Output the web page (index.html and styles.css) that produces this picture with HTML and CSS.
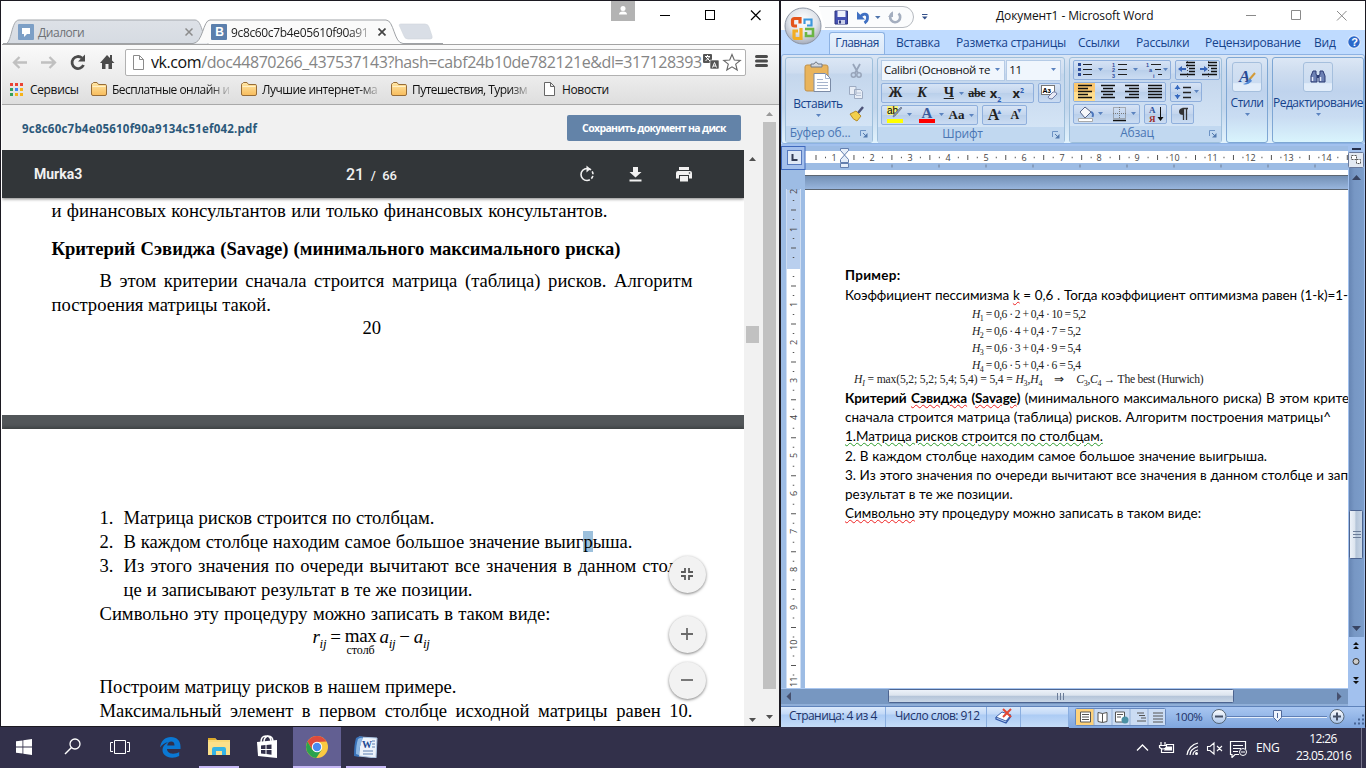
FILE: index.html
```
<!DOCTYPE html>
<html lang="ru">
<head>
<meta charset="utf-8">
<title>Рабочий стол</title>
<link rel="stylesheet" href="styles.css">
</head>
<body>
<svg width="0" height="0" class="defs">
  <defs>
    <linearGradient id="gFolder" x1="0" y1="0" x2="0" y2="1"><stop offset="0" stop-color="#ffe6a4"/><stop offset="1" stop-color="#f8bc5c"/></linearGradient>
    <linearGradient id="gTab" x1="0" y1="0" x2="0" y2="1"><stop offset="0" stop-color="#dde1e7"/><stop offset="1" stop-color="#d6dbe2"/></linearGradient>
    <radialGradient id="gOrb" cx=".5" cy=".35" r=".65"><stop offset="0" stop-color="#fff"/><stop offset=".6" stop-color="#dfe3ea"/><stop offset="1" stop-color="#a5acbb"/></radialGradient>
    <linearGradient id="gBall" x1="0" y1="0" x2="0" y2="1"><stop offset="0" stop-color="#fff"/><stop offset="1" stop-color="#a9c4ea"/></linearGradient>
    <symbol id="folder" viewBox="0 0 16 14"><path d="M.5 12V2.5q0-1 1-1l1-1H6l1.500 2H14q1.500 0 1.500 1V12q0 1.500-1.500 1.500H2Q.5 13.500.5 12z" fill="url(#gFolder)" stroke="#976d38"/><path d="M1.500 4.500h13" stroke="#fff1c8"/></symbol>
    <symbol id="launch" viewBox="0 0 8 8"><path d="M.5 6V.5H6" fill="none" stroke="#6d93c5"/><path d="M3 3l3 3" stroke="#5279ad"/><path d="M7.500 3v4.500H3z" fill="#5279ad"/></symbol>
    <symbol id="arr" viewBox="0 0 5 3"><path d="M0 0h5L2.500 3z" fill="#5b83bf"/></symbol>
  </defs>
</svg>

<main class="desktop">
  <section class="chrome">
    <header class="tabs">
      <svg class="tabshapes" width="440" height="26" viewBox="0 0 440 26">
        <path d="M2 25C9 25 8 1 16 1H192C200 1 200 25 206 25" fill="url(#gTab)" stroke="#a4a8ad"/>
        <path d="M397 8q-2-3 1-3h24q3 0 4 3l3 9q1 3-2 3h-22q-3 0-4-3z" fill="#d9dee6" stroke="#d0d5dc" stroke-width=".6"/>
        <path d="M0 24.500H190C200 24 200 1 207 1H383C391 1 391 24.500 400 24.500H440" fill="#fafafa" stroke="#9fa2a6"/>
      </svg>
      <div class="tab one">
        <svg width="16" height="16" viewBox="0 0 16 16"><rect width="16" height="16" rx="1" fill="#7c9fc6"/><path d="M4 4h8v6H9l-3 3v-3H4z" fill="#fff"/></svg>
        <span>Диалоги</span>
        <svg width="8" height="8" viewBox="0 0 8 8"><path d="M.5.5l7 7m0-7l-7 7" stroke="#8b8b8b" stroke-width="1.500"/></svg>
      </div>
      <div class="tab two">
        <svg width="16" height="16" viewBox="0 0 16 16"><rect width="16" height="16" rx="1" fill="#5b7fac"/><text x="4.200" y="12" class="vk">B</text></svg>
        <span class="fade">9c8c60c7b4e05610f90a91</span>
        <svg width="8" height="8" viewBox="0 0 8 8"><path d="M.5.5l7 7m0-7l-7 7" stroke="#444" stroke-width="1.700"/></svg>
      </div>
      <div class="winctl">
        <svg width="148" height="30" viewBox="0 0 148 30"><rect width="24" height="20" fill="#b3b3b3"/><circle cx="12" cy="7.500" r="2.500" fill="#fff"/><path d="M8 13.500q0-3 4-3t4 3z" fill="#fff"/><path d="M49 14.500h10" stroke="#000"/><rect x="94.500" y="9.500" width="9" height="9" fill="none" stroke="#000"/><path d="M140 9.500l9.500 9.500m0-9.500L140 19" stroke="#000" stroke-width="1.200"/></svg>
      </div>
    </header>
    <nav class="toolbar">
      <svg width="122" height="32" viewBox="0 0 122 32" fill="none">
        <path d="M25 17.500H12m5.500-5.500L12 17.500l5.500 5.500M39 17.500h14m-5.500-5.500l5.500 5.500-5.500 5.500" stroke="#c0c0c0" stroke-width="2.300"/>
        <path d="M80 13a6 6 0 1 0 1.500 7" stroke="#4b4b4b" stroke-width="2.800"/><path d="M83 9.500v7h-7z" fill="#4b4b4b"/>
        <path d="M98 18l7-8 3 3v-3h2v5.500l2.500 2.500H110v6h-3.500v-5h-3v5H100v-6z" fill="#4b4b4b"/>
      </svg>
      <div class="omnibox">
        <svg width="11" height="15" viewBox="0 0 11 15"><path d="M.5.5h6l4 4v10H.5zM6.500.5v4h4" fill="#fff" stroke="#8b8b8b"/></svg>
        <p class="url"><b>vk.com</b>/doc44870266_437537143?hash=cabf24b10de782121e&amp;dl=317128393</p>
        <svg width="40" height="20" viewBox="0 0 40 20"><rect x="0" y="2" width="9" height="9" rx="1" fill="#555"/><rect x="7" y="8" width="9" height="9" rx="1" fill="#555" stroke="#fff" stroke-width=".6"/><path d="M2 4.500h5M4.500 3v1.500M3 5l4 4M6.500 5L2.500 9M9.500 15.500l2-5 2 5m-3.300-1.500h2.600" stroke="#fff" fill="none"/><path d="M29 2.500l2.300 5.500 6 .4-4.600 3.800 1.500 5.800-5.200-3.200-5.200 3.200 1.500-5.800-4.600-3.800 6-.4z" fill="#fff" stroke="#666" stroke-width="1.100"/></svg>
      </div>
      <svg width="14" height="14" viewBox="0 0 14 14"><path d="M1.500 2.500h10M1.500 7h10M1.500 11.500h10" stroke="#4b4b4b" stroke-width="3" stroke-linecap="round"/></svg>
    </nav>
    <nav class="bookmarks">
      <svg width="13" height="13" viewBox="0 0 13 13"><path d="M0 0h3v3H0zM5 0h3v3H5z" fill="#ea4335"/><path d="M10 0h3v3h-3z" fill="#ea4335"/><path d="M0 5h3v3H0zM0 10h3v3H0z" fill="#34a05a"/><path d="M5 5h3v3H5z" fill="#4285f4"/><path d="M10 5h3v3h-3zM5 10h3v3H5zM10 10h3v3h-3z" fill="#f6b31a"/></svg>
      <span class="bm b0">Сервисы</span>
      <svg width="16" height="14"><use href="#folder"/></svg><span class="bm fade b1">Бесплатные онлайн и</span>
      <svg width="16" height="14"><use href="#folder"/></svg><span class="bm fade b2">Лучшие интернет-ма</span>
      <svg width="16" height="14"><use href="#folder"/></svg><span class="bm fade b3">Путешествия, Туризм</span>
      <svg width="11" height="14" viewBox="0 0 11 14"><path d="M.5.5h6l4 4v9H.5zM6.500.5v4h4" fill="#fff" stroke="#666"/></svg><span class="bm b4">Новости</span>
    </nav>
    <div class="viewport">
      <div class="page">
        <header class="vkbar"><strong>9c8c60c7b4e05610f90a9134c51ef042.pdf</strong><span class="save">Сохранить документ на диск</span></header>
        <div class="viewer">
          <div class="pdf">
            <header class="pdfbar">
              <span class="pname">Murka3</span><span class="pnum">21 <i>/</i> <small>66</small></span>
              <svg width="120" height="24" viewBox="0 0 120 24" fill="none">
                <path d="M11 6.500a6 6 0 0 0 0 12" stroke="#f1f1f1" stroke-width="1.600"/><path d="M11 18.500a6 6 0 0 0 0-12" stroke="#f1f1f1" stroke-width="1.600" stroke-dasharray="3 1.700"/><path d="M10.500 3.500l4 3.500-4 3.500z" fill="#f1f1f1"/>
                <path d="M57 5h5v5h3.500L59.500 15.500 53.500 10H57zM53.500 17.500h12v2h-12z" fill="#f1f1f1"/>
                <path d="M103 5h10v3h-10zM100 14.500V11q0-2 2-2h12q2 0 2 2v5.500h-3V13h-10v3.500h-3zM104 14h8v5.500h-8z" fill="#f1f1f1"/><circle cx="113.500" cy="11" r=".8" fill="#323639"/>
              </svg>
            </header>
            <article class="sheet first">
              <p class="ln l1">и финансовых консультантов или только финансовых консультантов.</p>
              <h2 class="ln l2">Критерий Сэвиджа (Savage) (минимального максимального риска)</h2>
              <p class="ln l3">В этом критерии сначала строится матрица (таблица) рисков. Алгоритм</p>
              <p class="ln l4">построения матрицы такой.</p>
              <p class="folio">20</p>
            </article>
            <article class="sheet second">
              <ol>
                <li><span>1.</span><p class="ln m1">Матрица рисков строится по столбцам.</p></li>
                <li><span>2.</span><p class="ln m2">В каждом столбце находим самое большое значение выиг<mark>р</mark>ыша.</p></li>
                <li><span>3.</span><p class="ln m3">Из этого значения по очереди вычитают все значения в данном столб-</p></li>
                <li><span></span><p class="ln m4">це и записывают результат в те же позиции.</p></li>
              </ol>
              <p class="ln m5">Символьно эту процедуру можно записать в таком виде:</p>
              <div class="eq"><i>r<sub>ij</sub></i><span>=</span><span class="mx">max<small>столб</small></span><i>a<sub>ij</sub></i><span>−</span><i>a<sub>ij</sub></i></div>
              <p class="ln m6">Построим матрицу рисков в нашем примере.</p>
              <p class="ln m7">Максимальный элемент в первом столбце исходной матрицы равен 10.</p>
            </article>
            <div class="fab f1"><svg width="14" height="14" viewBox="0 0 14 14"><path d="M1 5h4V1M9 1v4h4M13 9H9v4M5 13V9H1" fill="none" stroke="#5a5a5a" stroke-width="1.800"/></svg></div>
            <div class="fab f2"><svg width="14" height="14" viewBox="0 0 14 14"><path d="M7 1v12M1 7h12" stroke="#6a6a6a" stroke-width="1.800"/></svg></div>
            <div class="fab f3"><svg width="14" height="14" viewBox="0 0 14 14"><path d="M1 7h12" stroke="#6a6a6a" stroke-width="1.800"/></svg></div>
          </div>
          <svg class="vs" width="18" height="576" viewBox="0 0 18 576"><path d="M5 11h7L8.500 7z" fill="#505050"/><rect x="2" y="176" width="13" height="17" fill="#c1c1c1"/><path d="M5 568h7l-3.500 4z" fill="#505050"/></svg>
        </div>
      </div>
      <svg class="vs" width="16" height="621" viewBox="0 0 16 621"><path d="M3 11h7L6.500 7z" fill="#999"/><rect x="0" y="17" width="13" height="567" fill="#c1c1c1"/><path d="M3 610h7l-3.500 4z" fill="#505050"/></svg>
    </div>
  </section>

  <section class="word">
    <header class="title">
      <svg class="qat" width="160" height="30" viewBox="0 0 160 30" fill="none">
        <path d="M38 5.500h84a10.500 10.500 0 0 1 0 21H44" stroke="#b6bac0" fill="#fbfcfd"/>
        <path d="M54 10h12.500v13H54z" fill="#4450b2" stroke="#2f377f"/><path d="M56.500 10h8v6h-8z" fill="#eef1fb"/><path d="M57 19h7v4h-7z" fill="#c9cfe8"/><path d="M58 19.500h2v3h-2z" fill="#30397d"/>
        <path d="M79 16.500c3-5 8-4 7.500.5q0 3-3 5" stroke="#3f70c3" stroke-width="2.800"/><path d="M76 10.500v8h8z" fill="#3f70c3"/><path d="M94 15h5.500l-2.700 3z" fill="#4e73ac"/>
        <path d="M117.500 12.500a5 5 0 1 1-6-.5" stroke="#a4aebf" stroke-width="2.600"/><path d="M112 10v6h-5z" fill="#a4aebf"/>
        <path d="M141 13.500h5.500" stroke="#33508a"/><path d="M141 15.500h5.500l-2.700 3z" fill="#33508a"/>
      </svg>
      <span class="doctitle">Документ1 - Microsoft Word</span>
      <svg class="wctl" width="133" height="30" viewBox="0 0 133 30" fill="none" stroke="#8a8a8a"><path d="M14 14.500h10"/><path d="M59.500 9.500h9v9h-9zM105 10l9.500 9.500m0-9.500l-9.500 9.500"/></svg>
    </header>
    <svg class="orb" width="40" height="42" viewBox="0 0 40 42">
      <circle cx="20" cy="20" r="18" fill="url(#gOrb)" stroke="#8e96a5"/>
      <g fill="none" stroke-width="3.200"><path d="M17 17.500v-5h-5.500q-2 0-2 2V18q0 2 2 2H14" stroke="#e4551c"/><path d="M21.500 18v-4.500h7v6H24" stroke="#3d97dc" stroke-width="2.200"/><path d="M18 22v10.500h-5.500q-1.500 0-1.500-1.500V25h4" stroke="#f3ae24"/><path d="M22 23h8v7h-7v-4" stroke="#6bb544" stroke-width="2.600"/></g>
    </svg>
    <nav class="rtabs">
      <span class="active">Главная</span><span class="t2">Вставка</span><span class="t3">Разметка страницы</span><span class="t4">Ссылки</span><span class="t5">Рассылки</span><span class="t6">Рецензирование</span><span class="t7">Вид</span>
      <svg width="14" height="14" viewBox="0 0 14 14"><circle cx="7" cy="7" r="6.300" fill="#2b68ca" stroke="#dde9fa" stroke-width="1.200"/><text x="4.200" y="11" class="q">?</text></svg>
    </nav>
    <div class="ribbon">
      <div class="group clip">
        <div class="body">
          <div class="paste">
            <svg width="30" height="34" viewBox="0 0 30 34"><rect x="2" y="4" width="23" height="26" rx="2" fill="#e9b45c" stroke="#c0914b"/><path d="M8 6V3h3q2-4 4 0h4v3z" fill="#d3d7dd" stroke="#737b88"/><path d="M11 12.500h11.500l5 5v13H11z" fill="#fdfeff" stroke="#7b8ba6"/><path d="M22.500 12.500v5h5M14 18.500h6M14 21.500h11M14 24.500h11M14 27.500h11" fill="none" stroke="#a6b4cc"/></svg>
            <span>Вставить</span><svg width="5" height="3"><use href="#arr"/></svg>
          </div>
          <svg class="cut" width="18" height="62" viewBox="0 0 18 62" fill="none"><path d="M6 2l5 9M13 2L8 11" stroke="#98a5ba" stroke-width="1.800"/><circle cx="6.500" cy="13" r="2.200" stroke="#98a5ba" stroke-width="1.500"/><circle cx="12" cy="13" r="2.200" stroke="#98a5ba" stroke-width="1.500"/><path d="M2.500 24.500H9v8H2.500zM7.500 27.500h6l2 2v7h-8z" fill="#e7edf6" stroke="#9dabc2"/><path d="M9 31h5M9 33.500h5" stroke="#b6c2d6"/><path d="M16 45l-5 6" stroke="#4d5378" stroke-width="2.500"/><path d="M3 52l6-3 5 5-4 5q-4-1-7-7z" fill="#f1cf4c" stroke="#b68d2b"/></svg>
        </div>
        <footer>Буфер об...<svg width="8" height="8"><use href="#launch"/></svg></footer>
      </div>
      <div class="group font">
        <div class="body rows">
          <div class="combos"><div class="combo c1"><span>Calibri (Основной те</span><svg width="5" height="3"><use href="#arr"/></svg></div><div class="combo c2"><span>11</span><svg width="5" height="3"><use href="#arr"/></svg></div></div>
          <div class="row">
            <div class="btns w153"><b class="g1">Ж</b><b class="g1 it">К</b><b class="g1 un">Ч</b><svg width="5" height="3"><use href="#arr"/></svg><s>abc</s><b class="xx">x<sub>2</sub></b><b class="xx">x<sup>2</sup></b></div>
            <div class="btns w23"><svg width="18" height="18" viewBox="0 0 18 18"><rect x=".5" y="1.500" width="13" height="9" fill="#fff" stroke="#777"/><text x="1.500" y="9" class="aa">Aз</text><path d="M7 13l5-5q3-1 4 2l-5 5q-4 0-4-2z" fill="#e8eaf5" stroke="#6d7ba5"/></svg></div>
          </div>
          <div class="row">
            <div class="btns w96">
              <svg width="27" height="18" viewBox="0 0 27 18"><rect x="2" y="0" width="11" height="9" fill="#f8f27c"/><text x="2" y="8" class="ab">ab</text><path d="M17 2l-7 8-2 1 1-3 7-7z" fill="#8693ab" stroke="#5f6a80" stroke-width=".6"/><path d="M2 13h16v4H2z" fill="#ff0"/><path d="M22 7h5l-2.500 3z" fill="#5b83bf"/></svg>
              <svg width="27" height="18" viewBox="0 0 27 18"><text x="4.500" y="12" class="fa">A</text><path d="M2 13h16v4H2z" fill="red"/><path d="M22 7h5l-2.500 3z" fill="#5b83bf"/></svg>
              <b class="cs">Aa</b><svg width="5" height="3"><use href="#arr"/></svg>
            </div>
            <div class="btns w43"><b class="big">A<em>▴</em></b><b class="sml">A<em>▾</em></b></div>
          </div>
        </div>
        <footer>Шрифт<svg width="8" height="8"><use href="#launch"/></svg></footer>
      </div>
      <div class="group para">
        <div class="body rows">
          <div class="row">
            <div class="btns w98"><svg width="96" height="18" viewBox="0 0 96 18"><path d="M4 2h3v3H4zM4 7h3v3H4zM4 12h3v3H4z" fill="#2d4c9b"/><path d="M9 3.500h9M9 8.500h9M9 13.500h9M44 3.500h9M44 8.500h9M44 13.500h9M77 3.500h10M81 8.500h6M84 13.500h4" stroke="#222"/><path d="M24 7h5l-2.500 3zM59 7h5l-2.500 3zM89 7h5l-2.500 3z" fill="#5b83bf"/><text x="38" y="5.500" class="n">1</text><text x="38" y="11" class="n">2</text><text x="38" y="16.500" class="n">3</text><text x="72" y="5.500" class="n">1</text><text x="75" y="11" class="n">a</text><text x="79" y="16.500" class="n">i</text></svg></div>
            <div class="btns w45"><svg width="43" height="18" viewBox="0 0 43 18"><path d="M10 1.500h9M10 4.500h9M13 7.500h6M13 10.500h6M4 13.500h15M32 1.500h9M32 4.500h9M35 7.500h6M35 10.500h6M26 13.500h15" stroke="#111" stroke-width="1.600"/><path d="M2 8l4-3v2h4v2H6v2zM32 8l-4-3v2h-4v2h4v2z" fill="#3865b8"/><path d="M11.500 0v17M32.500 0v17" stroke="#555" stroke-dasharray="1 2"/></svg></div>
          </div>
          <div class="row">
            <div class="btns w93"><svg width="91" height="18" viewBox="0 0 91 18"><rect width="21" height="18" fill="#fbc76f"/><path d="M0 9h21v9H0z" fill="#ffdd8e"/><path d="M4 2.500h14M4 5.500h10M4 8.500h14M4 11.500h10M4 14.500h14M27 2.500h14M29 5.500h10M27 8.500h14M29 11.500h10M27 14.500h14M51 2.500h14M55 5.500h10M51 8.500h14M55 11.500h10M51 14.500h14M74 2.500h14M74 5.500h14M74 8.500h14M74 11.500h14M74 14.500h14" stroke="#111" stroke-width="1.400"/></svg></div>
            <div class="btns w32"><svg width="29" height="18" viewBox="0 0 29 18"><path d="M5.500 2v14" stroke="#386bc0" stroke-dasharray="5 4"/><path d="M2.500 6h6l-3-4zM2.500 12h6l-3 4z" fill="#386bc0"/><path d="M11 4.500h8M11 9.500h8M11 14.500h8" stroke="#222" stroke-width="1.300"/><path d="M22 7h5l-2.500 3z" fill="#5b83bf"/></svg></div>
          </div>
          <div class="row">
            <div class="btns w67"><svg width="65" height="18" viewBox="0 0 65 18"><path d="M6 7l5-5 6 5-6 6z" fill="#f7f8fb" stroke="#566488"/><path d="M17 7q3 1 1.500 5" stroke="#4d77bd" stroke-width="2" fill="none"/><path d="M4.500 13.500h14v3h-14z" fill="#fff" stroke="#aaa"/><path d="M24 7h5l-2.500 3zM57 7h5l-2.500 3z" fill="#5b83bf"/><path d="M39.500 2.500h12v11h-12zM45.500 2v12M39 8.500h13" fill="none" stroke="#777" stroke-dasharray="1 1"/><path d="M39 15.500h13" stroke="#111" stroke-width="1.500"/></svg></div>
            <div class="btns w23"><svg width="19" height="18" viewBox="0 0 19 18"><text x="3" y="8" class="sa">A</text><text x="3" y="17" class="sb">Я</text><path d="M14.500 2v12" stroke="#111"/><path d="M11.500 12h6l-3 4z" fill="#111"/></svg></div>
            <div class="btns w23"><svg width="14" height="16" viewBox="0 0 14 16"><path d="M12 2.500H6.500M7.500 2v12M10.500 2v12" stroke="#333" stroke-width="1.300" fill="none"/><path d="M7.500 2v7Q3 9 3 5.500T7.500 2z" fill="#333"/></svg></div>
          </div>
        </div>
        <footer>Абзац<svg width="8" height="8"><use href="#launch"/></svg></footer>
      </div>
      <div class="group tall st"><div class="tile"><svg width="20" height="20" viewBox="0 0 20 20"><text x="2" y="15" class="sty">A</text><path d="M18 6l-6 7" stroke="#d39a38" stroke-width="2"/><path d="M13 11l2 3q-5 5-9 3 5-1 7-6z" fill="#4f87d4"/></svg></div><span>Стили</span><svg width="5" height="3"><use href="#arr"/></svg></div>
      <div class="group tall ed"><div class="tile"><svg width="20" height="20" viewBox="0 0 20 20"><path d="M5 4h3v3l1 2v6H3V9zM12 4h3l2 5v6h-6V9l1-2z" fill="#6d81b4" stroke="#2c3b73"/><path d="M9 8h2v3H9z" fill="#2c3b73"/><path d="M4.500 10v4M12.500 10v4" stroke="#e4eafa" stroke-width="1.500"/></svg></div><span>Редактирование</span><svg width="5" height="3"><use href="#arr"/></svg></div>
    </div>
    <div class="work">
      <div class="canvas">
        <svg class="hr" width="567" height="24" viewBox="0 0 567 24">
          <rect width="567" height="24" fill="#9dbce4"/><rect x="24" y="5" width="543" height="12" fill="#fff"/><rect x=".5" y=".5" width="23.500" height="23" fill="#a4c0ec" stroke="#3f69bd"/><rect x="6.500" y="4.500" width="14" height="14" fill="#dfe8f6" stroke="#5779be"/><path d="M11.500 8v6h5" stroke="#333b55" stroke-width="2" fill="none"/>
          <g class="rn"><text x="53" y="15">1</text><text x="91" y="15">2</text><text x="129" y="15">3</text><text x="167" y="15">4</text><text x="205" y="15">5</text><text x="243" y="15">6</text><text x="281" y="15">7</text><text x="318" y="15">8</text><text x="356" y="15">9</text><text x="393.500" y="15">10</text><text x="431.500" y="15">11</text><text x="469.500" y="15">12</text><text x="507.500" y="15">13</text><text x="545.500" y="15">14</text></g>
          <path d="M34.500 11.500H567" stroke="#555" stroke-width="5" stroke-dasharray="1 36.950"/><path d="M44 11.500H567" stroke="#555" stroke-width="1.500" stroke-dasharray="1 17.975"/>
          <path d="M110.500 20H567" stroke="#6f7d93" stroke-width="3" stroke-dasharray="1 46"/>
          <path d="M59.500 2.500h8v2l-4 4.500-4-4.500zM59.500 16.500v-3l4-4.500 4 4.500v3zM59.500 17.500h8v4h-8z" fill="#e6eef9" stroke="#647fae"/>
        </svg>
        <div class="edit">
          <svg class="vr" width="24" height="518" viewBox="0 0 24 518">
            <rect width="24" height="518" fill="#9dbce4"/><rect x="6" y="20" width="13" height="79" fill="#b9cfee"/><rect x="6" y="99" width="13" height="419" fill="#fff"/><path d="M5.500 19v499M19.500 19v499" stroke="#cfdef3"/>
            <g class="rn"><text transform="translate(16 24)rotate(-90)">2</text><text transform="translate(16 62)rotate(-90)">1</text><text transform="translate(16 137)rotate(-90)">1</text><text transform="translate(16 175)rotate(-90)">2</text><text transform="translate(16 213)rotate(-90)">3</text><text transform="translate(16 250)rotate(-90)">4</text><text transform="translate(16 288)rotate(-90)">5</text><text transform="translate(16 326)rotate(-90)">6</text><text transform="translate(16 364)rotate(-90)">7</text><text transform="translate(16 402)rotate(-90)">8</text><text transform="translate(16 440)rotate(-90)">9</text><text transform="translate(16 480)rotate(-90)">10</text><text transform="translate(16 517)rotate(-90)">11</text></g>
            <path d="M12.500 39.500V96" stroke="#555" stroke-width="5" stroke-dasharray="1 36.950"/><path d="M12.500 30V96" stroke="#555" stroke-width="1.500" stroke-dasharray="1 17.975"/>
            <path d="M12.500 115.500V518" stroke="#555" stroke-width="5" stroke-dasharray="1 36.950"/><path d="M12.500 106V518" stroke="#555" stroke-width="1.500" stroke-dasharray="1 17.975"/>
          </svg>
          <div class="paper">
            <div class="gap"></div>
            <article class="doc">
              <p class="wl"><b class="ex">Пример:</b></p>
              <p class="wl j d1">Коэффициент пессимизма <u class="red">k</u> = 0,6 . Тогда коэффициент оптимизма равен (1-k)=1-</p>
              <div class="hm"><p><i>H</i><sub>1</sub> = 0,6 · 2 + 0,4 · 10 = 5,2</p><p><i>H</i><sub>2</sub> = 0,6 · 4 + 0,4 · 7 = 5,2</p><p><i>H</i><sub>3</sub> = 0,6 · 3 + 0,4 · 9 = 5,4</p><p><i>H</i><sub>4</sub> = 0,6 · 5 + 0,4 · 6 = 5,4</p></div>
              <p class="hbest"><span><i>H<sub>I</sub></i> = max(5,2; 5,2; 5,4; 5,4) = 5,4 = <i>H</i><sub>3</sub>,<i>H</i><sub>4</sub></span><span>⇒</span><span class="best"><i>C</i><sub>3</sub>,<i>C</i><sub>4</sub> → The best (Hurwich)</span></p>
              <p class="wl j d2"><b>Критерий <u class="red">Сэвиджа</u> (<u class="red">Savage</u>)</b> (минимального максимального риска) В этом крите</p>
              <p class="wl j d3">сначала строится матрица (таблица) рисков. Алгоритм построения матрицы^</p>
              <p class="wl j d4"><u class="green">1.Матрица рисков строится по столбцам.</u></p>
              <p class="wl j d5">2. В каждом столбце находим самое большое значение выигрыша.</p>
              <p class="wl j d6">3. Из этого значения по очереди вычитают все значения в данном столбце и зап</p>
              <p class="wl j d7">результат в те же позиции.</p>
              <p class="wl j d8"><u class="red">Символьно</u> эту процедуру можно записать в таком виде:</p>
            </article>
          </div>
        </div>
        <svg class="hs" width="567" height="18" viewBox="0 0 567 18"><defs><linearGradient id="gth" x1="0" y1="0" x2="0" y2="1"><stop offset="0" stop-color="#eef3fa"/><stop offset=".45" stop-color="#dce4ee"/><stop offset=".5" stop-color="#b4c4d8"/><stop offset="1" stop-color="#cbd8e8"/></linearGradient></defs><rect width="567" height="18" fill="#7797c1"/><path d="M0 .5h567M0 17h567" stroke="#a9c6ef"/><path d="M10 4v9L5.500 8.500z" fill="#46506e"/><path d="M556 4v9l4.500-4.500z" fill="#46506e"/><rect x="107.500" y="1.500" width="345" height="13" rx="1" fill="url(#gth)" stroke="#4d6490"/><path d="M276.500 5v7M279.500 5v7M282.500 5v7" stroke="#6b7c98"/></svg>
      </div>
      <svg class="wv" width="17" height="560" viewBox="0 0 17 560"><defs><linearGradient id="gtv"><stop offset="0" stop-color="#eef3fa"/><stop offset=".4" stop-color="#dce4ee"/><stop offset=".5" stop-color="#b4c4d8"/><stop offset="1" stop-color="#cbd8e8"/></linearGradient><linearGradient id="gvb"><stop offset="0" stop-color="#6685b3"/><stop offset=".35" stop-color="#7797c4"/><stop offset="1" stop-color="#7c9dca"/></linearGradient></defs><rect width="17" height="560" fill="#a2c1ee"/><rect x="1" y="22" width="15" height="469" fill="url(#gvb)"/><path d="M4 3h9" stroke="#26304b" stroke-width="2"/><rect x=".5" y="6.500" width="15" height="15" rx="1" fill="#e3e9f2" stroke="#69789a"/><path d="M3.500 9.500h5v4h-5zM8.500 13.500h4v4h-4z" fill="#fff" stroke="#555" stroke-dasharray="2 1"/><path d="M4 34h9l-4.500-5zM4 480h9l-4.500 5z" fill="#384462"/><rect x="1.500" y="364.500" width="13" height="48" rx="1" fill="url(#gtv)" stroke="#4d6490"/><path d="M5 385.500h8M5 388.500h8M5 391.500h8" stroke="#6b7c98"/><path d="M5 499h6l-3-3zM5 503h6l-3-3zM5 531h6l-3 3zM5 535h6l-3 3z" fill="#111"/><circle cx="8" cy="515.500" r="3" fill="#ccc" stroke="#333"/></svg>
    </div>
    <footer class="status">
      <span class="s1">Страница: 4 из 4</span><span class="s2">Число слов: 912</span>
      <span class="s3"><svg width="18" height="16" viewBox="0 0 18 16"><path d="M1 9l6-5 9 3-5 6z" fill="#fff" stroke="#4464a8"/><path d="M1 9v2l10 4 5-7" fill="none" stroke="#3459ab" stroke-width="1.300"/><path d="M8 1l8 8m0-8L8 9" stroke="#e44832" stroke-width="2"/></svg></span><span class="s4"></span>
      <svg class="zoom" width="296" height="21" viewBox="0 0 296 21" fill="none">
        <rect x="6.500" y="1.500" width="90" height="17" rx="1" fill="#cbdcf3" stroke="#6788bd"/><rect x="7" y="2" width="18" height="16" fill="#ffd27a"/><path d="M25 2v16M43 2v16M61 2v16M79 2v16" stroke="#93afd8"/>
        <g transform="translate(0 -.5)"><path d="M11.500 5.500h10v10h-10z" fill="#fff" stroke="#555"/><path d="M13 8h7M13 10.500h7M13 13h7M68 6.500h7M70 9h6M72 11.500h5M68 14.500h9M84 6.500h10M84 9.500h10M84 12.500h10M84 15.500h10" stroke="#555"/><path d="M29 6l4.500 1L38 6v9l-4.500 1-4.500-1zM33.500 7v9" fill="#fff" stroke="#555"/><path d="M46.500 5.500h9v10h-9z" fill="#fff" stroke="#555"/><path d="M48 8h6M48 10.500h4" stroke="#555"/><circle cx="56" cy="13.500" r="3.500" fill="#4b91a5"/></g>
        <text x="106" y="13.500" class="pc">100%</text><path d="M158 9.500h100" stroke="#5f7fb6"/><path d="M158 10.500h100" stroke="#e6effb"/>
        <circle cx="150" cy="9.500" r="7" fill="url(#gBall)" stroke="#567"/><circle cx="268" cy="9.500" r="7" fill="url(#gBall)" stroke="#567"/><path d="M146 9.500h8M264 9.500h8M268 5.500v8" stroke="#455066" stroke-width="2"/><path d="M204.500 3.500h8v7l-4 4-4-4z" fill="#eef4fd" stroke="#51699a"/><path d="M208.500 6v5" stroke="#51699a"/>
        <path d="M285 16.500h2m2 0h2m2 0h2M289 12.500h2m2 0h2M293 8.500h2" stroke="#486596" stroke-width="2"/>
      </svg>
    </footer>
  </section>
</main>

<footer class="taskbar">
  <div class="apps">
    <div class="app"><svg width="16" height="16" viewBox="0 0 16 16"><path d="M0 2.300l6.500-.9v6.100H0zM7.300 1.300L16 0v7.500H7.300zM0 8.400h6.500v6.200L0 13.700zM7.300 8.400H16V16l-8.700-1.200z" fill="#fff"/></svg></div>
    <div class="app"><svg width="17" height="17" viewBox="0 0 17 17"><circle cx="11" cy="6" r="5" fill="none" stroke="#fff" stroke-width="1.300"/><path d="M7.500 9.500L1 16" stroke="#fff" stroke-width="1.500"/></svg></div>
    <div class="app"><svg width="20" height="14" viewBox="0 0 20 14"><path d="M4.500.5h11v13h-11zM3 2.500H.5v9H3M17 2.500h2.500v9H17" fill="none" stroke="#fff"/></svg></div>
    <div class="app edge"><svg width="21" height="22" viewBox="0 0 21 22"><path d="M0 11.500C1 5 5 1 11 1c6 0 9.500 4 9.500 9.500v2.500H7c0 3 3 4.700 6 4.700 2.600 0 4.500-.7 6.200-1.700V20q-3 1.700-7 1.700C6 21.700 2.500 18 2.500 14c0-3 1.700-5.700 5.500-7.700C5 6.700 2 8.500 0 11.500zM7.200 9.500h7.300c0-2.700-1-4-3.300-4-2.200 0-3.600 1.600-4 4z" fill="#0a78d4"/></svg></div>
    <div class="app run"><svg width="22" height="19" viewBox="0 0 22 19"><path d="M0 1h7l2 2h13v15H0z" fill="#f9d978"/><path d="M0 1h7l1 2H0z" fill="#dca928"/><path d="M0 5h22v13H0z" fill="#fce08a"/><path d="M4 18v-6q0-2 2-2h10q2 0 2 2v6h-4v-4H8v4z" fill="#35b3e5"/></svg></div>
    <div class="app store"><svg width="22" height="24" viewBox="0 0 22 24"><path d="M5 7q0-6 5-6t5 6M8 7q0-5 4-6 5 0 5 6" fill="none" stroke="#fff" stroke-width="1.500"/><path d="M1 7l20-2v18L2 21z" fill="#fff"/><path d="M5 10.500l4.500-.4v4H5zM10.500 10l5-.5v4.600h-5zM5 15h4.500v4L5 18.500zM10.500 15h5v4.700l-5-.6z" fill="#32304a"/></svg></div>
    <div class="app cur"><svg width="22" height="22" viewBox="0 0 22 22"><circle cx="11" cy="11" r="11" fill="#fbc942"/><path d="M1.500 5.500A11 11 0 0 1 20.500 5.500L11 6 6.200 13.700z" fill="#de4a3d"/><path d="M1.500 5.500a11 11 0 0 0 8.700 16.400L15.700 13.700 11 16l-4.800-2.300z" fill="#2ba24d"/><circle cx="11" cy="11" r="5.200" fill="#fff"/><circle cx="11" cy="11" r="4.200" fill="#4a8bf0"/></svg></div>
    <div class="app wrd"><svg width="24" height="22" viewBox="0 0 24 22"><path d="M5 1l18 1-1 20-17-2z" fill="#edf3fb" stroke="#a9c3e3"/><path d="M2 2q4-3 7-1-4 9-4 20l-5-1Q0 9 2 2z" fill="#3972b9"/><path d="M4 3q3-2 5-1-4 9-4 17l-3-1Q2 9 4 3z" fill="#8db7e4"/><text x="8" y="12" class="wi">W</text><path d="M9 15h10M9 18h10M18 5h3M18 8h3M18 11h3" stroke="#5d7fb2"/></svg></div>
  </div>
  <div class="tray">
    <svg width="112" height="20" viewBox="0 0 112 20" fill="none" stroke="#fff">
      <path d="M1 12.500l5.500-5.500 5.500 5.500" stroke-width="1.300"/>
      <path d="M30 6.500h7.500v8h-12V11M25 4v3M29 4v3M23.500 7.500h7v2q-3.500 3-7 0z" stroke-width="1.200"/><path d="M30 8.500h6v4h-8z" fill="#fff" stroke="none"/>
      <path d="M51 17A14 14 0 0 1 62 5M54 17q0-6 8-8.500M57 17q0-4 5-5" stroke-width="1.200"/><circle cx="60.500" cy="15.500" r="1.500" fill="#fff" stroke="none"/>
      <path d="M71.500 8.500h2.500L78 5v11l-4-3.500h-2.500zM81 8l5 5m0-5l-5 5" stroke-width="1.100"/>
      <path d="M103 16.500h-4l-3 3v-3h-1.500v-13h15V11M97 7.500h10M97 10.500h8M97 13.500h5" stroke-width="1.200"/><circle cx="107" cy="14" r="3.500" fill="#32304a"/><path d="M105 14h4"/>
    </svg>
    <span class="eng">ENG</span><span class="clock">12:26<br>23.05.2016</span><i class="peek"></i>
  </div>
</footer>
</body>
</html>
```
FILE: styles.css
```
* { box-sizing: border-box; }
body { margin: 0; width: 1366px; height: 768px; overflow: hidden; background: #32304a; font: 12px "Open Sans", "Noto Sans", sans-serif; color: #111; display: flex; flex-direction: column; }
p, h2, ol { margin: 0; padding: 0; }
svg { flex: none; display: block; }
.defs { position: absolute; }
.desktop { display: flex; height: 727px; background: #222238; }

/* browser window */
.chrome { width: 781px; height: 727px; display: flex; flex-direction: column; border: solid #1c1a22; border-width: 1px 2px 1px 1px; padding-left: 1px; background: #fff; }
.tabs { height: 44px; display: flex; align-items: flex-end; position: relative; background: #fff; border-bottom: 1px solid #a3a3a3; }
.tabshapes { position: absolute; left: 1px; top: 18px; }
.tab { position: relative; display: flex; align-items: center; height: 24px; padding-bottom: 0; }
.tab.one { margin-left: 16px; width: 193px; color: #6d7176; }
.tab.one span { margin-left: 4px; width: 147px; letter-spacing: -.45px; }
.tab.two { width: 190px; color: #222; }
.tab.two span { margin-left: 4px; width: 141px; margin-right: 6px; letter-spacing: -.35px; }
.vk { font: bold 12px "Liberation Sans", sans-serif; fill: #fff; }
.fade { overflow: hidden; white-space: nowrap; mask-image: linear-gradient(90deg, #000 84%, rgba(0,0,0,.2) 99%); }
.winctl { margin-left: auto; align-self: flex-start; margin-right: 20px; width: 148px; }
.winctl svg { overflow: visible; }
.toolbar { height: 32px; display: flex; align-items: center; background: linear-gradient(#fafafa, #ececec); }
.omnibox { width: 621px; height: 27px; margin: 2px 9px 0 1px; border: 1px solid #b1b1b1; border-radius: 2px; background: #fff; display: flex; align-items: center; padding-left: 7px; }
.url { margin-left: 7px; width: 552px; overflow: hidden; white-space: nowrap; font-size: 16px; line-height: 24px; color: #858585; letter-spacing: -.42px; }
.url b { font-weight: 400; color: #111; }
.bookmarks { height: 28px; display: flex; align-items: center; padding: 0 0 3px 8px; background: linear-gradient(#ececec, #dedede); border-bottom: 1px solid #a9a9a9; }
.bm { width: 117px; margin: 0 13px 0 5px; white-space: nowrap; letter-spacing: -.45px; }
.b0 { width: 49px; margin: 0 12px 0 7px; letter-spacing: -.35px; }
.b1 { letter-spacing: -.52px; }
.b2 { letter-spacing: -.5px; }
.b3 { margin-right: 16px; letter-spacing: -.55px; }
.b4 { margin-left: 7px; letter-spacing: -.35px; }
.bm.fade + svg { margin-left: -1px; }
.viewport { flex: 1; display: flex; background: #f1f1f1; }
.page { flex: 1; display: flex; flex-direction: column; }
.vkbar { height: 45px; display: flex; align-items: center; justify-content: space-between; padding: 1px 22px 0 20px; }
.vkbar strong { color: #2b587a; font-size: 11.5px; letter-spacing: .22px; }
.save { width: 174px; height: 26px; border-radius: 2px; background: #6383a8; color: #fff; font: bold 10.5px/26px "Open Sans", sans-serif; letter-spacing: -.65px; text-align: center; }
.viewer { flex: 1; display: flex; }
.vs { background: #f1f1f1; }
.pdf { width: 742px; height: 576px; position: relative; overflow: hidden; background: #525659; display: flex; flex-direction: column; }
.pdfbar { height: 48px; flex: none; display: flex; align-items: center; background: #323639; color: #f1f1f1; padding-left: 32px; box-shadow: 0 1px 3px rgba(0,0,0,.5); position: relative; }
.pname { width: 312px; font: bold 14px Roboto, sans-serif; }
.pnum { width: 230px; font: 500 16px Roboto, sans-serif; word-spacing: 2.500px; }
.pnum i, .pnum small { font-size: 13px; font-style: normal; }
.sheet { background: #fff; flex: none; font: 18.620px/24px "Liberation Serif", serif; color: #000; padding-left: 49.500px; }
.first { height: 217px; }
.second { height: 300px; margin-top: 14px; padding: 77px 0 0 97.500px; box-shadow: 0 -2px 3px #3e4244; }
.ln { white-space: nowrap; text-align-last: justify; font-size: inherit; }
.l1 { width: 556px; font-size: 18.800px; margin-top: .5px; }
.l2 { width: 569px; margin-top: 14px; }
.l3 { width: 593px; margin: 8px 0 0 48px; }
.l4 { width: 219px; }
.folio { margin: -1px 0 0 311px; }
ol { list-style: none; }
li { display: flex; }
li span { width: 24px; }
.m1 { width: 311px; } .m2 { width: 509px; } .m3 { width: 569px; } .m4 { width: 349px; } .m5 { width: 451px; }
.m6 { width: 357px; } .m7 { width: 593px; }
mark { background: #9cc0dc; color: inherit; }
.eq { height: 49px; display: flex; gap: 4px; padding: 0 0 0 213px; font-size: 19px; line-height: 22px; letter-spacing: -.3px; }
.eq sub { font-size: 13px; line-height: 0; vertical-align: -5px; }
.mx { display: flex; flex-direction: column; align-items: center; line-height: 20px; margin-right: -1px; }
.mx small { font-size: 12px; line-height: 8px; letter-spacing: 0; }
.fab { position: absolute; left: 666.500px; width: 37px; height: 37px; border-radius: 50%; background: #f2f2f2; box-shadow: 0 1px 3px rgba(0,0,0,.5); display: grid; place-items: center; }
.f1 { top: 405.500px; } .f2 { top: 465.500px; } .f3 { top: 511.500px; }

/* word processor window */
.word { width: 585px; height: 727px; position: relative; display: flex; flex-direction: column; border-top: 1px solid #1c1a22; border-right: 1px solid #1c1a22; background: #bfdbff; color: #15428b; }
.title { height: 29px; display: flex; align-items: center; background: #fff; color: #111; }
.doctitle { letter-spacing: -.1px; margin-left: 55px; }
.wctl { margin-left: auto; }
.orb { position: absolute; left: 2px; top: 5px; }
.rtabs { height: 24px; display: flex; align-items: center; padding-left: 48px; white-space: nowrap; letter-spacing: -.25px; }
.rtabs span { flex: none; }
.active { width: 56px; height: 22px; margin-top: 2px; border: 1px solid #8db2e3; border-bottom: 0; border-radius: 3px 3px 0 0; background: linear-gradient(#e8f2fe, #dbe8f7); line-height: 20px; text-align: center; letter-spacing: -.6px; }
.t2 { width: 60px; margin-left: 11px; } .t3 { width: 122px; } .t4 { width: 58px; } .t5 { width: 69px; } .t6 { width: 109px; } .t7 { width: 33px; }
.q { font: bold 11px "Liberation Sans", sans-serif; fill: #fff; }
.ribbon { height: 90px; display: flex; gap: 4px; padding: 2px 2px 2px 3px; border: 1px solid #8db2e3; border-radius: 3px; background: linear-gradient(#dbe6f4, #c9daee 18%, #c3d6ec 60%, #e2f3fd); }
.group { height: 86px; border: 1px solid #9ebfdb; border-radius: 3px; display: flex; flex-direction: column; background: linear-gradient(#dce7f5, #cddcef 18%, #c4d6ec 19%, #d8e8f8); flex: none; }
.clip { width: 88px; } .font { width: 188px; } .para { width: 153px; } .st { width: 42px; } .ed { width: 92px; }
.group footer { height: 16px; display: flex; align-items: center; justify-content: center; position: relative; background: #c1d8f0; color: #4a76b4; padding-right: 17px; letter-spacing: -.2px; line-height: 14px; padding-bottom: 2px; }
.group footer svg { position: absolute; right: 4px; top: 4px; }
.clip footer { padding-right: 18px; }
.body { flex: 1; display: flex; }
.paste { width: 56px; padding-left: 8px; display: flex; flex-direction: column; align-items: center; font-size: 12px; letter-spacing: -.45px; }
.paste svg:first-child { margin: 3px 0 0; }
.paste > svg:last-child { margin-top: 2px; }
.cut { margin: 4px 0 0 5px; }
.rows { flex-direction: column; gap: 2px; padding: 2px 3px; }
.row { display: flex; gap: 4px; height: 20px; }
.combos { display: flex; height: 21px; gap: 1px; }
.combo { display: flex; align-items: center; justify-content: space-between; background: #f0f6fd; border: 1px solid #b5cbe6; padding: 0 4px 2px 2px; color: #111; font-size: 11.500px; white-space: nowrap; letter-spacing: -.3px; }
.c1 { width: 125px; } .c2 { width: 55px; }
.btns { display: flex; align-items: center; justify-content: space-around; border: 1px solid #8fafdc; border-radius: 2px; background: linear-gradient(#d6e3f5, #c4d6ee 48%, #b9cfea 50%, #cbdcf2); color: #222; font-family: "Liberation Serif", serif; }
.w153 { width: 153px; } .w23 { width: 23px; } .w96 { width: 97px; } .w43 { width: 45px; } .w98 { width: 98px; } .w45 { width: 45px; } .w93 { width: 93px; } .w32 { width: 32px; } .w67 { width: 67px; }
.g1 { font-size: 14px; width: 22px; text-align: center; }
.it { font-style: italic; } .un { text-decoration: underline; margin-right: -6px; }
.btns s { font-size: 12px; font-weight: bold; letter-spacing: -.4px; }
.xx { font: bold 13px "Open Sans", sans-serif; width: 18px; white-space: nowrap; }
.xx sub, .xx sup { font-size: 7px; line-height: 0; color: #2e5cb1; }
.aa { font: bold 7px "Liberation Sans", sans-serif; } .ab { font: 10px "Liberation Sans", sans-serif; }
.fa { font: bold 15px "Liberation Serif", serif; fill: #3b5a9b; }
.cs { font-size: 13px; }
.big { font-size: 16px; line-height: 18px; } .sml { font-size: 12px; }
.big em, .sml em { font: 8px/1 "DejaVu Sans", sans-serif; color: #3b62a8; vertical-align: 6px; margin-left: -2px; }
.n { font: bold 5.500px "Liberation Sans", sans-serif; fill: #2d4c9b; }
.sa, .sb { font: bold 9px "Liberation Serif", serif; fill: #2c4f9c; } .sb { fill: #9c2c2c; }
.tall { align-items: center; background: linear-gradient(#dce7f5, #cddcef 18%, #bfd3ed 40%, #c9dcf2 70%, #d9f4fd); border-color: #7ea7d4; letter-spacing: -.5px; }
.tile { width: 30px; height: 30px; margin: 4px 0 2px; border: 1px solid #a5bfdd; border-radius: 3px; display: grid; place-items: center; background: linear-gradient(#d5e2f2, #cbdcf1 70%, #e2edfa 74%); }
.tall > svg { margin-top: 2px; }
.sty { font: italic bold 17px "Liberation Serif", serif; fill: #274a95; }
.work { flex: 1; display: flex; padding-top: 2px; background: #a2c1ee; }
.canvas { width: 567px; display: flex; flex-direction: column; }
.rn { font: 9px "Open Sans", sans-serif; fill: #444; }
.vr .rn { text-anchor: start; }
.hr .rn { text-anchor: middle; }
.edit { display: flex; height: 518px; }
.paper { width: 543px; background: #fff; overflow: hidden; padding-top: 5px; }
.gap { height: 15px; border: solid #5c6672; border-width: 1px 0; background: linear-gradient(#7390b5, #98b5dd); }
.doc { padding: 76px 0 0 40px; font: 13.480px/19.200px Lato, "Open Sans", sans-serif; color: #000; }
.wl { white-space: nowrap; height: 19.200px; }
.ex { letter-spacing: .3px; }
.j { text-align-last: justify; }
.d1 { width: 503px; margin-top: .6px; } .d2 { width: 504px; } .d3 { width: 486px; } .d4 { width: 257px; } .d5 { width: 422px; } .d6 { width: 503px; } .d7 { width: 167px; } .d8 { width: 356px; }
.d1, .d2 { letter-spacing: -.04px; }
.red { text-decoration: underline wavy #e22 1px; text-underline-offset: 1px; }
.green { text-decoration: underline wavy #2a9a2a 1px; text-underline-offset: 1px; }
.hm, .hbest { font: 11.600px/17px "Liberation Serif", serif; white-space: nowrap; color: #222; }
.hm { padding: .6px 0 0 127px; height: 67px; }
.hm p { letter-spacing: -.55px; }
.hm sub, .hbest sub { font-size: 8px; line-height: 0; }
.hbest { display: flex; gap: 12px; padding-left: 9px; height: 17px; line-height: 16px; letter-spacing: -.14px; }
.best { letter-spacing: -.28px; }
.status { height: 21px; display: flex; border-top: 1px solid #5f83bb; background: linear-gradient(#dbe9fb, #c3d9f7 35%, #accbf4 40%, #c5dcf8); color: #1d3368; white-space: nowrap; line-height: 18px; letter-spacing: -.53px; }
.status span { border-right: 1px solid #8aaee0; flex: none; }
.s1 { width: 105px; padding-left: 8px; } .s2 { width: 101px; padding-left: 9px; } .s3 { width: 34px; padding: 1px 0 0 8px; } .s4 { width: 48px; }
.zoom { background: linear-gradient(#a8c6f1, #7fa5dd); }
.pc { font: 11.500px "Open Sans", sans-serif; fill: #1d3368; letter-spacing: -.5px; }

/* taskbar */
.taskbar { height: 41px; display: flex; justify-content: space-between; background: #32304a; color: #fff; }
.apps { display: flex; }
.app { width: 48px; height: 41px; display: grid; place-items: center; border-bottom: 2px solid transparent; }
.edge { margin-left: 2px; }
.run { width: 40px; margin: 0 4px 0 5px; border-color: #c6b8f5; }
.cur { background: #625f92; border-color: #c6b8f5; margin-left: 2px; }
.wrd { width: 40px; margin-left: 5px; border-color: #c6b8f5; }
.tray { display: flex; align-items: center; }
.eng { margin: 0 0 0 8px; width: 40px; letter-spacing: -.4px; }
.clock { width: 54px; text-align: center; line-height: 17px; letter-spacing: -.6px; white-space: nowrap; padding-bottom: 2px; }
.peek { width: 1px; height: 41px; margin: 0 4px 0 11px; background: #77758c; }
.wi { font: bold 10px "Liberation Serif", serif; fill: #1e4a93; }
```
